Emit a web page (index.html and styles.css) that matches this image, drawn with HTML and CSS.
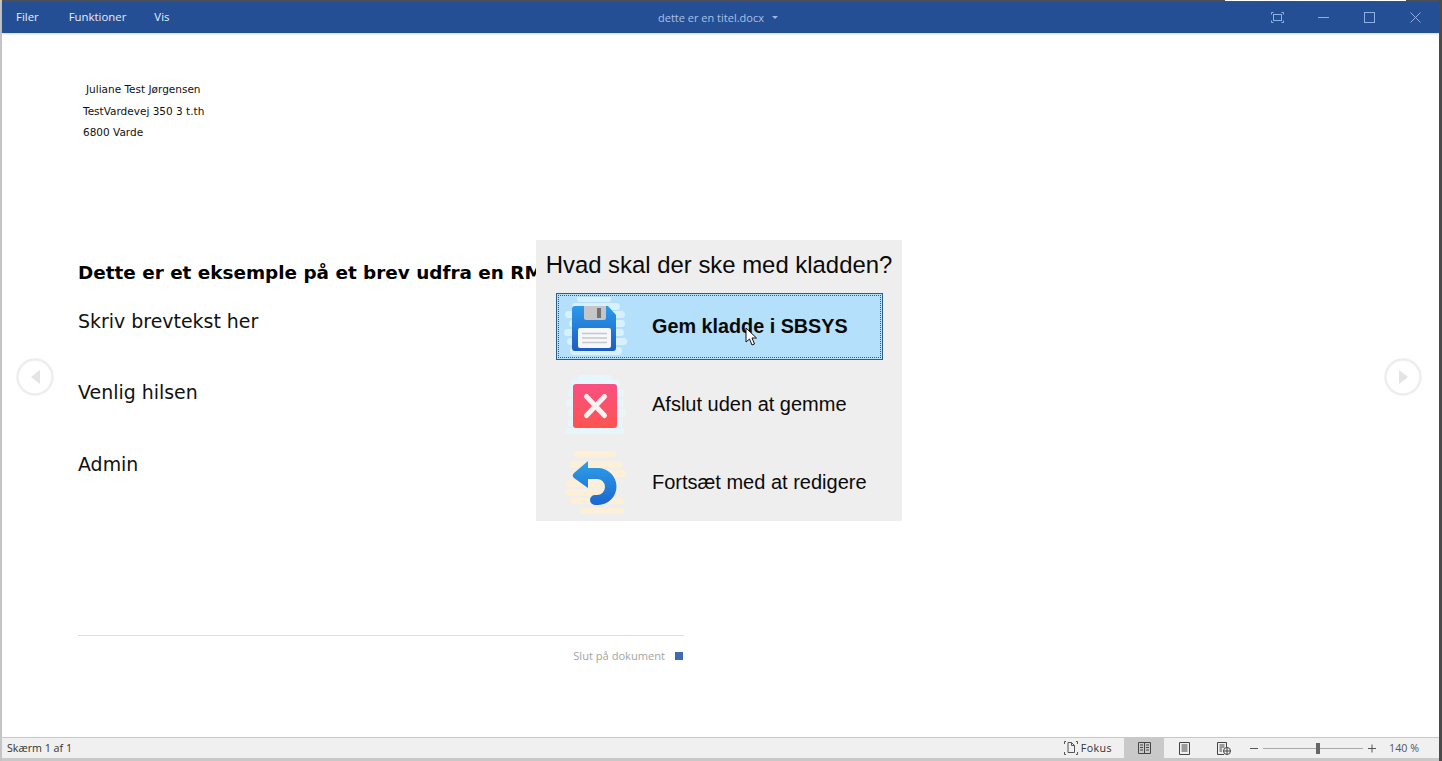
FILE: index.html
```html
<!DOCTYPE html>
<html lang="da">
<head>
<meta charset="utf-8">
<title>dette er en titel.docx</title>
<link rel="stylesheet" href="styles.css">
</head>
<body>
<div class="window">
  <div class="topline"><span class="topline-light"></span></div>
  <header class="titlebar">
    <nav class="menu">
      <span>Filer</span>
      <span class="menu-mid">Funktioner</span>
      <span>Vis</span>
    </nav>
    <div class="doc-title">dette er en titel.docx<svg class="caret" width="6" height="3" viewBox="0 0 6 3"><path d="M0 0h6L3 3z" fill="#9db8e0"/></svg></div>
    <div class="win-controls">
      <svg class="fullscreen" width="13" height="11" viewBox="0 0 13 11" fill="none" stroke="#8fb0e6"><path d="M.5 2.500V.5H2.500M10.500 .5h2V2.500M12.500 8.500v2h-2M2.500 10.500h-2v-2"/><rect x="2.500" y="2.500" width="8" height="6"/></svg>
      <svg width="11" height="11" viewBox="0 0 11 11" stroke="#8fb0e6"><path d="M0 5.500h11"/></svg>
      <svg width="11" height="11" viewBox="0 0 11 11" fill="none" stroke="#8fb0e6"><rect x=".5" y=".5" width="10" height="10"/></svg>
      <svg width="11" height="11" viewBox="0 0 11 11" stroke="#8fb0e6"><path d="M.5.5l10 10M10.500.5l-10 10"/></svg>
    </div>
  </header>
  <main class="document">
    <section class="page">
      <div class="address">
        <p class="addr-first">Juliane Test Jørgensen</p>
        <p>TestVardevej 350 3 t.th</p>
        <p>6800 Varde</p>
      </div>
      <h1>Dette er et eksemple på et brev udfra en RM</h1>
      <p class="body-text">Skriv brevtekst her</p>
      <p class="body-text gap">Venlig hilsen</p>
      <p class="body-text gap">Admin</p>
      <div class="doc-end"><span>Slut på dokument</span><i class="end-mark"></i></div>
    </section>
    <svg class="nav-arrow nav-prev" width="38" height="38" viewBox="0 0 38 38"><circle cx="19" cy="19" r="17.500" fill="none" stroke="#eeeeee" stroke-width="2.500"/><path d="M24 12v14l-9-7z" fill="#e4e4e4"/></svg>
    <svg class="nav-arrow nav-next" width="38" height="38" viewBox="0 0 38 38"><circle cx="19" cy="19" r="17.500" fill="none" stroke="#eeeeee" stroke-width="2.500"/><path d="M15 12v14l9-7z" fill="#e4e4e4"/></svg>
    <div class="dialog">
      <div class="dialog-title">Hvad skal der ske med kladden?</div>
      <div class="option active">
        <span class="icon">
          <svg width="64" height="60" viewBox="0 0 64 60">
            <defs><linearGradient id="g1" x1="0" y1="0" x2="0" y2="1"><stop offset="0" stop-color="#2b9bea"/><stop offset="1" stop-color="#1c5cc2"/></linearGradient></defs>
            <g fill="#d8f1fd"><rect x="13" y="-1" width="34" height="6" rx="3"/><rect x="8" y="6" width="48" height="7" rx="3.500"/><rect x="1" y="14" width="60" height="7" rx="3.500"/><rect x="5" y="23" width="56" height="7" rx="3.500"/><rect x="0" y="32" width="60" height="7" rx="3.500"/><rect x="3" y="41" width="60" height="7" rx="3.500"/><rect x="6" y="50" width="52" height="8" rx="4"/></g>
            <path d="M11 9h33l8 9v33a3 3 0 0 1-3 3H11a3 3 0 0 1-3-3V12a3 3 0 0 1 3-3z" fill="url(#g1)"/>
            <path d="M20 9h22v12a2 2 0 0 1-2 2H22a2 2 0 0 1-2-2z" fill="#c6c6c8"/>
            <rect x="33" y="11" width="4" height="10" fill="#6f7378"/>
            <rect x="14" y="31" width="33" height="20" rx="2" fill="#f5f7fa"/>
            <path d="M18 36.500h25M18 41h25M18 45.500h25" stroke="#c5c7cc" stroke-width="1.500"/>
          </svg>
        </span>
        <span class="option-label strong">Gem kladde i SBSYS</span>
        <svg class="cursor" width="13" height="19" viewBox="0 0 13 19"><path d="M1 1v14l3.500-3 2.500 6 2.500-1-2.500-6h4.500z" fill="#fff" stroke="#111" stroke-width="1"/></svg>
      </div>
      <div class="option">
        <span class="icon">
          <svg width="64" height="60" viewBox="0 0 64 60">
            <defs><linearGradient id="g2" x1="0" y1="0" x2="0" y2="1"><stop offset="0" stop-color="#f94f82"/><stop offset="1" stop-color="#fd5450"/></linearGradient></defs>
            <g fill="#e6f6fa"><rect x="14" y="0" width="34" height="5" rx="2.500"/><rect x="6" y="5" width="50" height="8" rx="4"/><rect x="4" y="14" width="56" height="8" rx="4"/><rect x="2" y="24" width="58" height="8" rx="4"/><rect x="4" y="34" width="58" height="8" rx="4"/><rect x="3" y="44" width="56" height="8" rx="4"/><rect x="1" y="53" width="60" height="6" rx="3"/></g>
            <rect x="9" y="9" width="44" height="44" rx="3" fill="url(#g2)"/>
            <path d="M22.500 21.500l18 19M40.500 21.500l-18 19" stroke="#fdf1f1" stroke-width="5" stroke-linecap="round"/>
          </svg>
        </span>
        <span class="option-label">Afslut uden at gemme</span>
      </div>
      <div class="option">
        <span class="icon">
          <svg class="overflowing" width="64" height="60" viewBox="0 0 64 60">
            <defs><linearGradient id="g3" x1="0" y1="0" x2="0" y2="1"><stop offset="0" stop-color="#2fa0e6"/><stop offset="1" stop-color="#1c66d0"/></linearGradient></defs>
            <g fill="#fdf0d6"><rect x="10" y="-2" width="42" height="6" rx="3"/><rect x="6" y="8" width="52" height="7" rx="3.500"/><rect x="8" y="17" width="54" height="7" rx="3.500"/><rect x="2" y="27" width="52" height="7" rx="3.500"/><rect x="1" y="36" width="50" height="7" rx="3.500"/><rect x="6" y="45" width="54" height="6" rx="3"/><rect x="16" y="55" width="44" height="6" rx="3"/></g>
            <path d="M24 8L10 20a3.500 3.500 0 0 0 0 5l14 10v-9h9a8 8 0 0 1 0 16h-2a5 5 0 0 0 0 10h3a18.500 18.500 0 0 0 0-37H24z" fill="url(#g3)"/>
          </svg>
        </span>
        <span class="option-label">Fortsæt med at redigere</span>
      </div>
    </div>
  </main>
  <footer class="statusbar">
    <span class="page-count">Skærm 1 af 1</span>
    <div class="status-right">
      <span class="focus">
        <svg width="14" height="14" viewBox="0 0 14 14" fill="none" stroke="#555"><path d="M.5 3V.5H2M12 .5h1.500V3M13.500 11v2.500H12M2 13.500H.5V11"/><path d="M4 1.500h3.500l3 3v7H4zM7.500 1.500v3h3"/></svg>
        <span class="focus-label">Fokus</span>
      </span>
      <span class="view active-view">
        <svg width="13" height="12" viewBox="0 0 13 12" fill="none" stroke="#444"><path d="M.5.5h12v11H.5zM6.500.5v11M2 3h3M2 5.500h3M2 8h3M8 3h3M8 5.500h3M8 8h3"/></svg>
      </span>
      <span class="view">
        <svg width="11" height="13" viewBox="0 0 11 13" fill="none" stroke="#444"><path d="M.5.5h10v12H.5zM2.500 3h6M2.500 5h6M2.500 7h6M2.500 9h6"/></svg>
      </span>
      <span class="view">
        <svg width="14" height="13" viewBox="0 0 14 13" fill="none" stroke="#444"><path d="M7 12.500H.5V.5h9v5M2.500 3h5M2.500 5h5M2.500 7h2.500M2.500 9h2.500"/><circle cx="10" cy="9" r="3.500"/><path d="M6.500 9h7M10 5.500v7"/></svg>
      </span>
      <div class="zoom">
        <svg width="8" height="9" viewBox="0 0 8 9" stroke="#555"><path d="M0 4.500h8"/></svg>
        <span class="slider"><i class="thumb"></i></span>
        <svg width="8" height="9" viewBox="0 0 8 9" stroke="#555"><path d="M0 4.500h8M4 .5v8"/></svg>
      </div>
      <span class="percent">140 %</span>
    </div>
  </footer>
  <div class="bottomline"></div>
</div>
</body>
</html>
```
FILE: styles.css
```css
* { box-sizing: border-box; }
html, body { margin: 0; height: 100%; overflow: hidden; background: #fff; }
p, h1 { margin: 0; }

.window {
  width: 1442px;
  height: 761px;
  display: flex;
  flex-direction: column;
  border-left: 2px solid #c4c4c4;
  border-right: 3px solid #4a4a4a;
}

.topline { height: 2px; background: #4a4f58; flex: none; display: flex; justify-content: flex-end; }
.topline-light { width: 181px; height: 1px; background: #fff; margin-right: 33px; }

.titlebar {
  flex: none;
  height: 31px;
  background: #254f94;
  display: grid;
  grid-template-columns: 1fr auto 1fr;
  align-items: center;
  font: 11.400px "Open Sans", sans-serif;
  box-shadow: 0 1px 2px rgba(60, 90, 140, .25);
  position: relative;
  z-index: 1;
}
.menu { display: flex; gap: 28px; padding: 0 0 2px 14px; color: #e6edf8; }
.menu-mid { margin-left: 2px; }
.doc-title { color: #a9c0e4; display: flex; align-items: center; gap: 8px; font-size: 11px; margin-left: -5px; }
.win-controls { display: flex; justify-content: flex-end; align-items: center; gap: 35px; padding-right: 18px; }
.fullscreen { margin-right: -1px; }

.document { flex: 1; position: relative; min-height: 0; }
.page { padding: 46px 0 0 76px; width: 682px; }
.address { font: 10.500px/21.500px "DejaVu Sans", sans-serif; color: #111; padding-left: 5px; }
.addr-first { padding-left: 3px; }
h1 {
  font: bold 18.400px/28px "DejaVu Sans", sans-serif;
  color: #000;
  margin-top: 115px;
  white-space: nowrap;
}
.body-text { font: 18.950px/28px "DejaVu Sans", sans-serif; color: #111; margin-top: 20px; }
.body-text.gap { margin-top: 43.500px; }
.doc-end {
  margin-top: 157px;
  border-top: 1px solid #dedede;
  padding-top: 13px;
  padding-right: 1px;
  display: flex;
  justify-content: flex-end;
  align-items: center;
  gap: 10px;
  font: 11.100px/14px "Open Sans", sans-serif;
  color: #a3a3a3;
}
.end-mark { width: 8px; height: 8px; background: #3c6cb0; }

.nav-arrow { position: absolute; top: 325px; }
.nav-prev { left: 14px; }
.nav-next { left: 1382px; }

.dialog {
  position: absolute;
  left: 534px;
  top: 207px;
  width: 366px;
  height: 281px;
  background: #eeeeee;
  padding-top: 10px;
}
.dialog-title { font: 23.900px/30px "Liberation Sans", sans-serif; color: #0a0a0a; text-align: center; white-space: nowrap; }
.option {
  height: 67px;
  margin: 13px 19px 11px 20px;
  display: flex;
  align-items: center;
  position: relative;
  font: 20px "Liberation Sans", sans-serif;
  color: #0a0a0a;
}
.option.active {
  background: #b5e0fb;
  border: 1px solid #2c5e90;
  outline: 1px dotted #2c5e90;
  outline-offset: -3px;
}
.option + .option { margin-top: 11px; }
.icon { width: 64px; height: 60px; margin-left: 7px; flex: none; display: flex; }
.option:not(.active) .icon { margin-left: 8px; }
.option-label { margin-left: 24px; white-space: nowrap; }
.strong { font-weight: bold; font-size: 19.800px; }
.cursor { position: absolute; left: 188px; top: 33px; }
.overflowing { overflow: visible; }

.statusbar {
  flex: none;
  height: 21px;
  background: #f0f0f0;
  border-top: 1px solid #c8c8c8;
  display: flex;
  align-items: center;
  justify-content: space-between;
  font: 10.700px "Open Sans", sans-serif;
  color: #333;
  padding-left: 5px;
}
.status-right { display: flex; align-items: center; height: 100%; }
.focus { display: flex; align-items: center; gap: 3px; margin-right: 12px; }
.focus-label { letter-spacing: .4px; }
.view { width: 40px; height: 100%; display: flex; align-items: center; justify-content: center; }
.active-view { background: #c9c9c9; }
.zoom { display: flex; align-items: center; gap: 5px; margin-left: 6px; }
.slider { width: 100px; height: 1px; background: #aaa; position: relative; display: block; }
.thumb { position: absolute; left: 53px; top: -5px; width: 4px; height: 11px; background: #666; }
.percent { margin-left: 13px; margin-right: 20px; color: #555; }

.bottomline { flex: none; height: 3px; background: #c8c8c8; }
```
